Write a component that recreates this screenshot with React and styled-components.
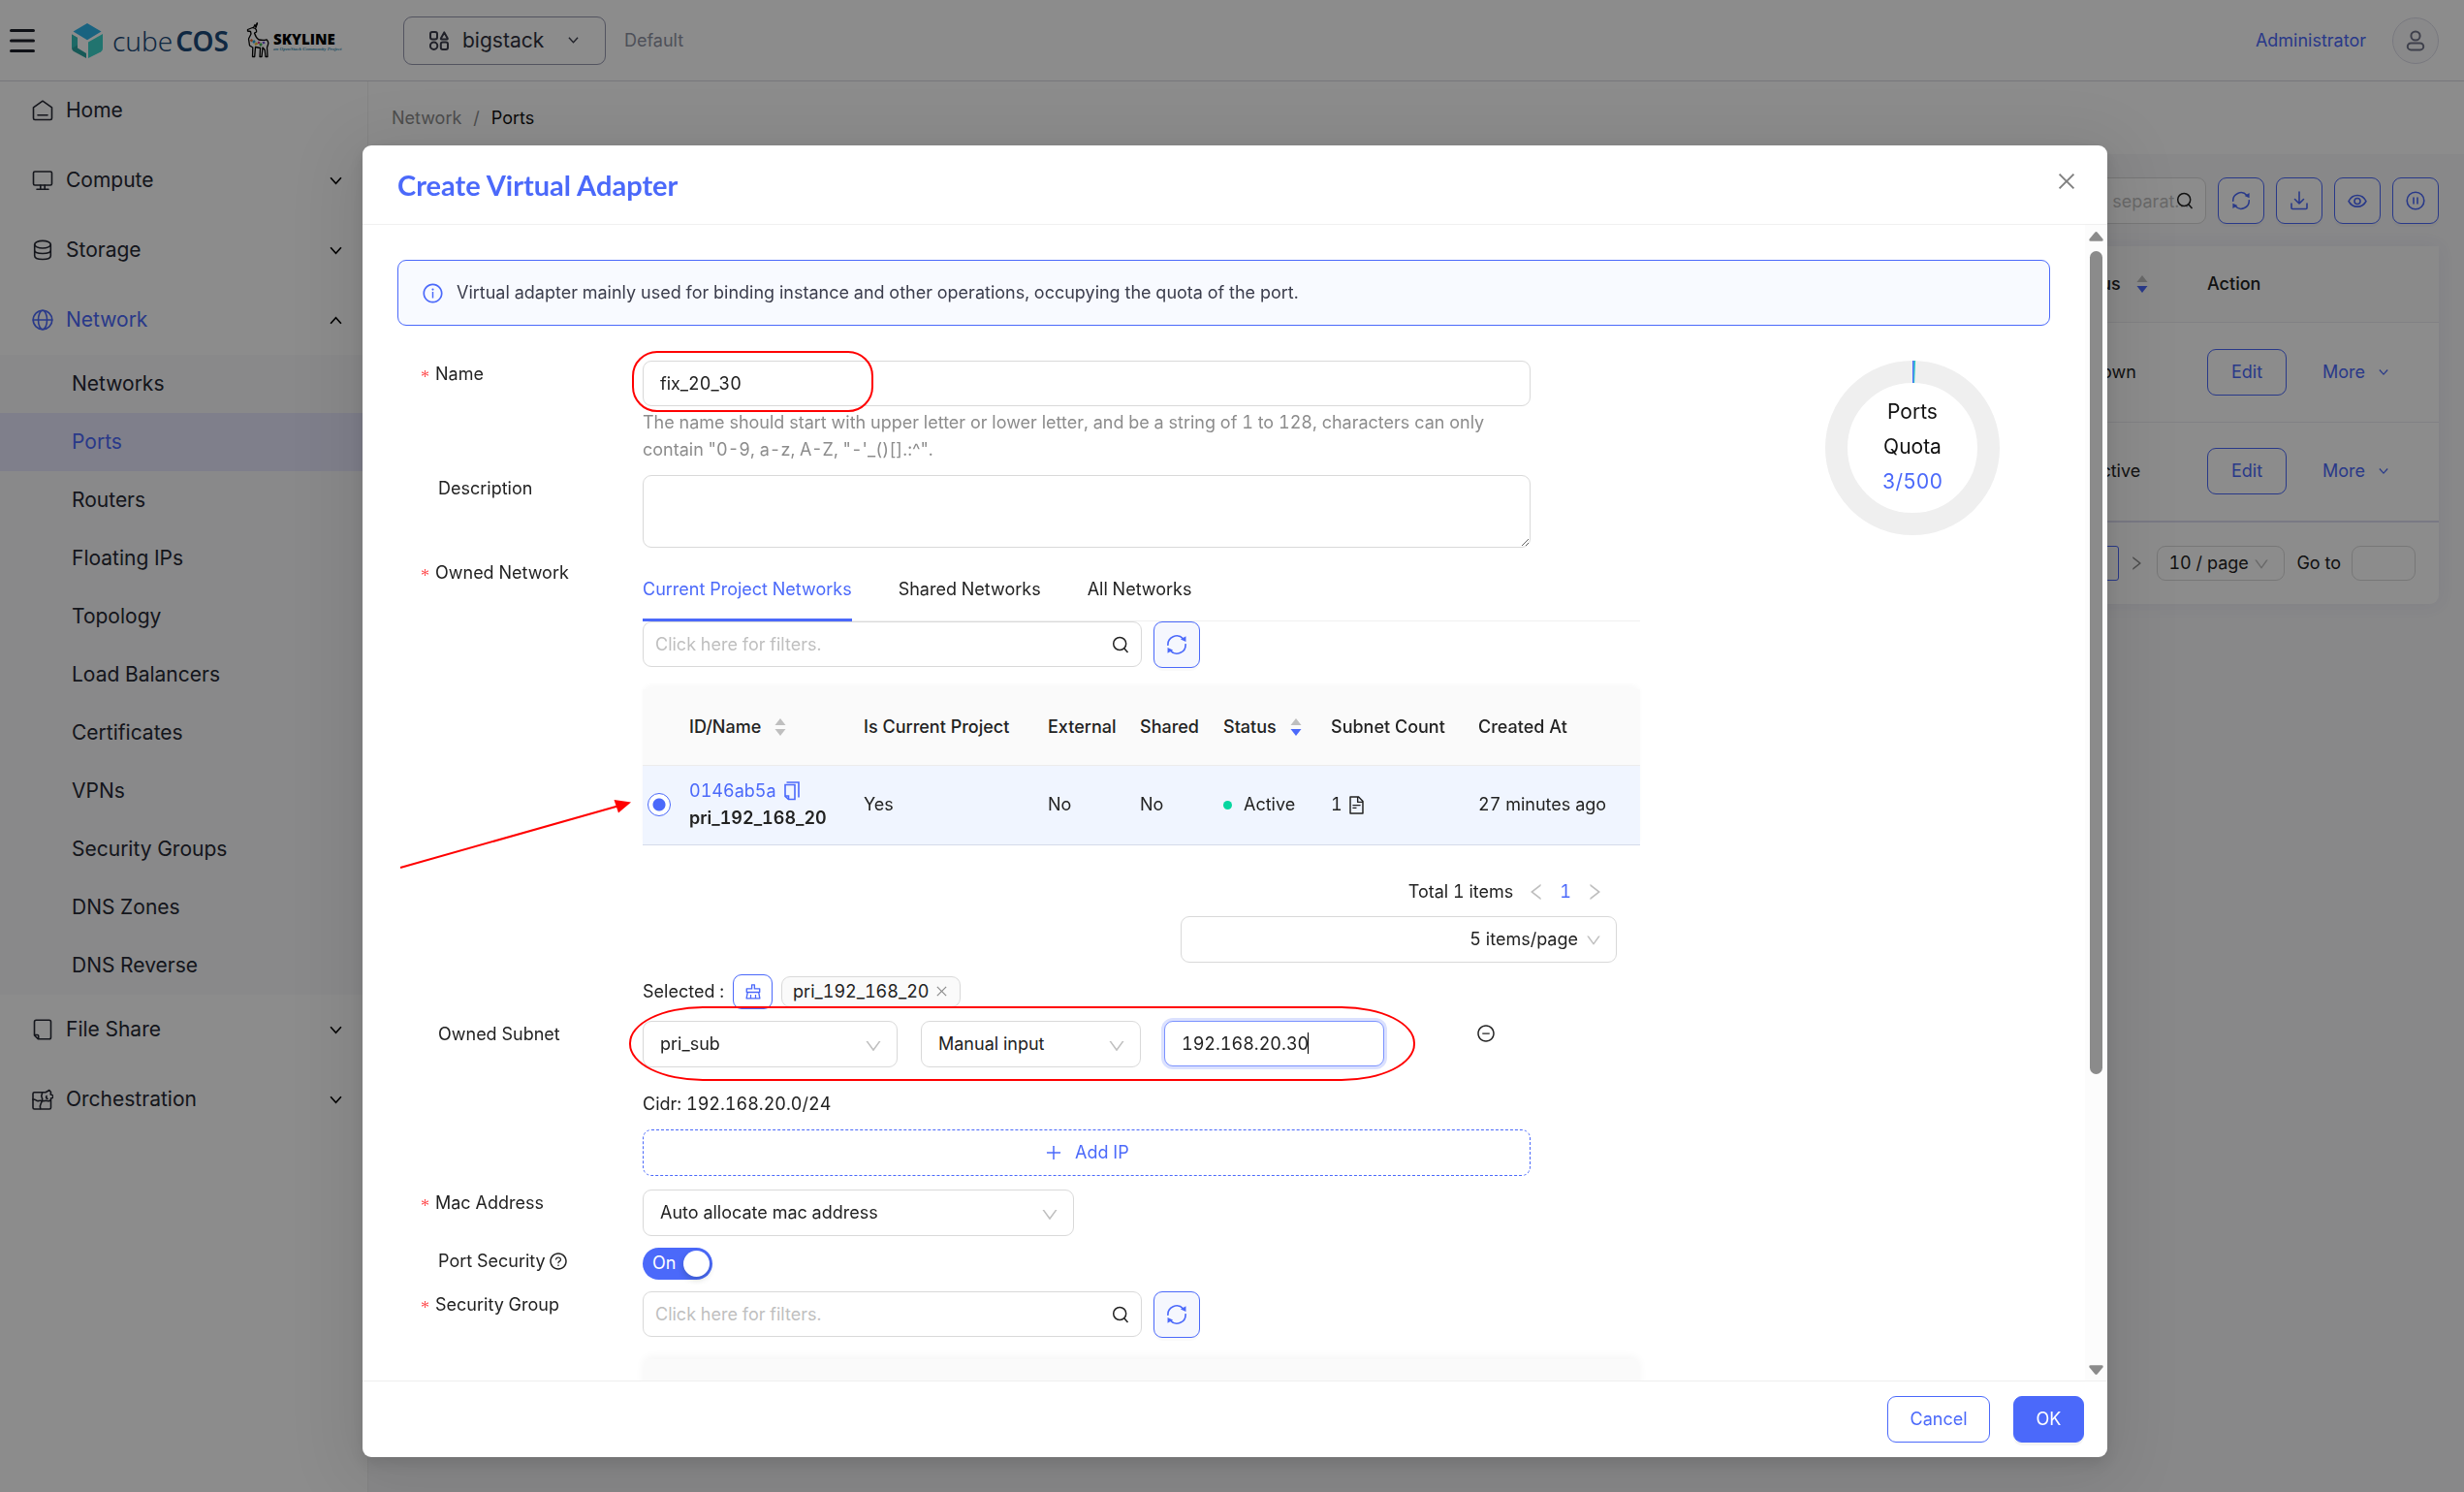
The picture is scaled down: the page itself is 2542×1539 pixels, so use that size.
import { useState } from "react";
import styled, { createGlobalStyle, css } from "styled-components";
import {
  AiOutlineClear,
  AiOutlineClose,
  AiOutlineDown,
  AiOutlineFileText,
  AiOutlineInfoCircle,
  AiOutlineLeft,
  AiOutlineMinusCircle,
  AiOutlinePlus,
  AiOutlineQuestionCircle,
  AiOutlineRight,
} from "react-icons/ai";

const blue = "#4b69fa";
const line = "#d9d9d9";

const subItems = [
  "Networks",
  "Ports",
  "Routers",
  "Floating IPs",
  "Topology",
  "Load Balancers",
  "Certificates",
  "VPNs",
  "Security Groups",
  "DNS Zones",
  "DNS Reverse",
];

export default function App() {
  return (
    <>
      <GlobalStyle />
      <Page>
        <TopBar />
        <Main>
          <SideMenu />
          <PortsPage />
        </Main>
      </Page>
      <Overlay>
        <CreateAdapter />
      </Overlay>
    </>
  );
}

function TopBar() {
  return (
    <Header>
      <MenuButton aria-label="menu">
        <svg width="26" height="26" viewBox="0 0 26 26" stroke="#1d1f28" strokeWidth="3" strokeLinecap="round">
          <path d="M1.5 2.5h23M1.5 13h23M1.5 23.5h23" />
        </svg>
      </MenuButton>
      <CubeLogo />
      <CubeName>
        cube<b>COS</b>
      </CubeName>
      <Llama />
      <Skyline>
        <strong>SKYLINE</strong>
        <em>an OpenStack Community Project</em>
      </Skyline>
      <ProjectButton>
        <svg width="20" height="20" viewBox="0 0 20 20" fill="none" stroke="#3b3d4c" strokeWidth="2">
          <rect x="1" y="1" width="7" height="7.5" rx="2" />
          <path d="M15.3 1.4l3.4 6.2c.2.5 0 .9-.5.9h-5.8c-.5 0-.8-.4-.5-.9z" strokeLinejoin="round" />
          <circle cx="4.6" cy="15.2" r="3.7" />
          <rect x="11.8" y="11.6" width="7.2" height="7.4" rx="2" />
        </svg>
        <span>bigstack</span>
        <Chevron size={11} color="#3b3d4c" />
      </ProjectButton>
      <Domain>Default</Domain>
      <UserLink href="#user">Administrator</UserLink>
      <Avatar aria-label="user">
        <svg width="20" height="22" viewBox="0 0 20 22" fill="none" stroke="#72758a" strokeWidth="2">
          <circle cx="10" cy="6" r="4.6" />
          <rect x="1.8" y="13.4" width="16.4" height="7" rx="3.5" />
        </svg>
      </Avatar>
    </Header>
  );
}

function SideMenu() {
  return (
    <Sidebar>
      <MenuRow href="#home">
        <HomeIcon />
        Home
      </MenuRow>
      <MenuRow href="#compute">
        <ComputeIcon />
        Compute
        <Chevron size={13} color="#000" />
      </MenuRow>
      <MenuRow href="#storage">
        <StorageIcon />
        Storage
        <Chevron size={13} color="#000" />
      </MenuRow>
      <MenuRow href="#network" $active>
        <NetworkIcon />
        Network
        <Chevron size={13} color="#000" up />
      </MenuRow>
      <SubMenu>
        {subItems.map((item) => (
          <SubRow key={item} href={"#" + item} $active={item === "Ports"}>
            {item}
          </SubRow>
        ))}
      </SubMenu>
      <MenuRow href="#share">
        <ShareIcon />
        File Share
        <Chevron size={13} color="#000" />
      </MenuRow>
      <MenuRow href="#orchestration">
        <PuzzleIcon />
        Orchestration
        <Chevron size={13} color="#000" />
      </MenuRow>
    </Sidebar>
  );
}

function PortsPage() {
  return (
    <Content>
      <Breadcrumb>
        <a href="#network">Network</a>
        <span>/</span>
        <strong>Ports</strong>
      </Breadcrumb>
      <ListArea>
        <Toolbar>
          <PageSearch>
            <input aria-label="filter" placeholder="Multiple filter tags are separated by enter" />
            <SearchIcon />
          </PageSearch>
          <SquareButton aria-label="refresh">
            <RefreshIcon size={20} />
          </SquareButton>
          <SquareButton aria-label="download">
            <svg width="20" height="20" viewBox="0 0 20 20" {...strokeProps}>
              <path d="M10 1v12M5.5 8.5L10 13l4.500-4.500M2 13v4.500q0 1 1 1h14q1 0 1-1V13" />
            </svg>
          </SquareButton>
          <SquareButton aria-label="columns">
            <svg width="20" height="20" viewBox="0 0 20 20" {...strokeProps}>
              <path d="M1 10.500C5 2.500 15 2.500 19 10.500C15 18 5 18 1 10.500z" />
              <circle cx="10" cy="10.500" r="3" />
            </svg>
          </SquareButton>
          <SquareButton aria-label="pause">
            <svg width="20" height="20" viewBox="0 0 20 20" {...strokeProps}>
              <circle cx="10" cy="10" r="8.800" />
              <path d="M8 7v6M12 7v6" />
            </svg>
          </SquareButton>
        </Toolbar>
        <Card>
          <PortsTable>
            <colgroup>
              <col />
              <col style={{ width: 144 }} />
              <col style={{ width: 239 }} />
            </colgroup>
            <thead>
              <tr>
                <th></th>
                <th>
                  <Inline $gap={16}>
                    Status <Sorter down />
                  </Inline>
                </th>
                <th>Action</th>
              </tr>
            </thead>
            <tbody>
              <PortRow status="Down" />
              <PortRow status="Active" />
            </tbody>
          </PortsTable>
          <PageFooter>
            <PageNumber>1</PageNumber>
            <AiOutlineRight size={18} color="#8c8c8c" />
            <SelectBox $width={132} $height={36} $pad={11}>
              <select aria-label="page size">
                <option>10 / page</option>
              </select>
              <AiOutlineDown size={18} />
            </SelectBox>
            <GoTo>
              Go to
              <input aria-label="page" />
            </GoTo>
          </PageFooter>
        </Card>
      </ListArea>
    </Content>
  );
}

function PortRow({ status }) {
  return (
    <tr>
      <td></td>
      <td>
        <Inline $gap={13}>
          <Dot $off={status === "Down"} />
          {status}
        </Inline>
      </td>
      <td>
        <Inline $gap={37}>
          <OutlineButton $width={82}>Edit</OutlineButton>
          <MoreButton>
            More <Chevron size={10} color={blue} />
          </MoreButton>
        </Inline>
      </td>
    </tr>
  );
}

function CreateAdapter() {
  const [name, setName] = useState("fix_20_30");
  const [ip, setIp] = useState("192.168.20.30");
  const [security, setSecurity] = useState(true);

  return (
    <Modal role="dialog" aria-labelledby="modal-title">
      <ModalHeader>
        <h2 id="modal-title">Create Virtual Adapter</h2>
        <CloseButton aria-label="close">
          <AiOutlineClose size={24} />
        </CloseButton>
      </ModalHeader>

      <ModalBody>
        <Scrollable>
          <Alert>
            <AiOutlineInfoCircle size={23} color={blue} />
            Virtual adapter mainly used for binding instance and other operations, occupying the quota of the port.
          </Alert>

          <Columns>
            <Form>
              <Row>
                <Label htmlFor="name" $required>Name</Label>
                <Field>
                  <TextInput id="name" value={name} onChange={(e) => setName(e.target.value)} />
                  <Help>
                    The name should start with upper letter or lower letter, and be a string of 1 to 128, characters can
                    only contain "0-9, a-z, A-Z, "-'_()[].:^".
                  </Help>
                  <NameMark />
                </Field>
              </Row>

              <Row>
                <Label htmlFor="description">Description</Label>
                <Field>
                  <TextArea id="description" />
                </Field>
              </Row>

              <Row>
                <Label as="span" $required>Owned Network</Label>
                <Field>
                  <NetworkPicker />
                </Field>
              </Row>

              <Row>
                <Label htmlFor="subnet">Owned Subnet</Label>
                <Field>
                  <SubnetRow>
                    <SelectBox $width={263} $height={48} $pad={17}>
                      <select id="subnet">
                        <option>pri_sub</option>
                      </select>
                      <AiOutlineDown size={20} />
                    </SelectBox>
                    <SelectBox $width={227} $height={48} $pad={17}>
                      <select aria-label="ip type">
                        <option>Manual input</option>
                      </select>
                      <AiOutlineDown size={20} />
                    </SelectBox>
                    <IpBox>
                      <IpInput aria-label="ip" value={ip} onChange={(e) => setIp(e.target.value)} />
                      <Caret />
                    </IpBox>
                    <RemoveButton aria-label="remove">
                      <AiOutlineMinusCircle size={20} />
                    </RemoveButton>
                    <SubnetMark />
                  </SubnetRow>
                  <Cidr>Cidr: 192.168.20.0/24</Cidr>
                  <AddButton>
                    <AiOutlinePlus size={20} />
                    Add IP
                  </AddButton>
                </Field>
              </Row>

              <Row>
                <Label htmlFor="mac" $required>Mac Address</Label>
                <Field>
                  <SelectBox $width={445} $height={48} $pad={17}>
                    <select id="mac">
                      <option>Auto allocate mac address</option>
                    </select>
                    <AiOutlineDown size={20} />
                  </SelectBox>
                </Field>
              </Row>

              <Row>
                <Label htmlFor="security">
                  Port Security
                  <AiOutlineQuestionCircle size={20} />
                </Label>
                <Field>
                  <Switch>
                    <input
                      id="security"
                      type="checkbox"
                      checked={security}
                      onChange={() => setSecurity(!security)}
                    />
                    <span>On</span>
                    <i />
                  </Switch>
                </Field>
              </Row>

              <Row>
                <Label htmlFor="group" $required>Security Group</Label>
                <Field>
                  <FilterBar id="group" />
                  <TableBox>
                    <EmptyHead />
                  </TableBox>
                </Field>
              </Row>
            </Form>

            <QuotaSide>
              <Quota>
                <svg width="180" height="180" viewBox="0 0 180 180">
                  <circle cx="90" cy="90" r="78.500" fill="none" stroke="#efefef" strokeWidth="23" />
                  <path d="M90 0h1.700v23H90z" fill={blue} />
                  <path d="M91.600 0h1.500l-1 23h-.9z" fill="#1fc7c4" />
                </svg>
                <QuotaText>
                  Ports
                  <br />
                  Quota
                  <br />
                  <b>3/500</b>
                </QuotaText>
              </Quota>
            </QuotaSide>
          </Columns>
        </Scrollable>

        <ScrollTrack>
          <svg width="15" height="10" viewBox="0 0 15 10" fill="#8b8b8b">
            <path d="M6.200.8q1.300-1.400 2.600 0l5.600 6.800q1 2-1.200 2.200H1.800Q-.4 9.600.6 7.600z" />
          </svg>
          <ScrollThumb />
          <svg width="15" height="10" viewBox="0 0 15 10" fill="#8b8b8b">
            <path d="M6.200 9.200q1.300 1.400 2.600 0l5.600-6.800q1-2-1.200-2.200H1.800Q-.4.400.6 2.400z" />
          </svg>
        </ScrollTrack>
      </ModalBody>

      <ModalFooter>
        <OutlineButton $width={106}>Cancel</OutlineButton>
        <OkButton $width={73}>OK</OkButton>
      </ModalFooter>
    </Modal>
  );
}

function FilterBar({ id }) {
  return (
    <Filter>
      <FilterInput>
        <input id={id} aria-label="filters" placeholder="Click here for filters." />
        <SearchIcon />
      </FilterInput>
      <SquareButton $tint aria-label="refresh">
        <RefreshIcon size={22} />
      </SquareButton>
    </Filter>
  );
}

function NetworkPicker() {
  return (
    <>
      <Tabs>
        <Tab $active>Current Project Networks</Tab>
        <Tab>Shared Networks</Tab>
        <Tab>All Networks</Tab>
      </Tabs>
      <FilterBar />
      <TableBox>
        <NetworkTable>
          <colgroup>
            {[48, 180, 190, 95, 86, 111, 152].map((width, i) => (
              <col key={i} style={{ width }} />
            ))}
            <col />
          </colgroup>
          <thead>
            <tr>
              <th></th>
              <th>
                <Inline $gap={14}>
                  ID/Name <Sorter />
                </Inline>
              </th>
              <th>Is Current Project</th>
              <th>External</th>
              <th>Shared</th>
              <th>
                <Inline $gap={14}>
                  Status <Sorter down />
                </Inline>
              </th>
              <th>Subnet Count</th>
              <th>Created At</th>
            </tr>
          </thead>
          <tbody>
            <tr>
              <td>
                <Radio type="radio" name="network" aria-label="pri_192_168_20" defaultChecked />
              </td>
              <td>
                <NetworkLink href="#0146ab5a">
                  0146ab5a
                  <svg width="16" height="20" viewBox="0 0 16 20" fill="none" stroke={blue} strokeWidth="1.600">
                    <path d="M1 3.500h10v15H4.500L1 15.300zM2.500 1H15v15.500" />
                    <path d="M1 15h3.500v3.500" />
                  </svg>
                </NetworkLink>
                <NetworkName>pri_192_168_20</NetworkName>
              </td>
              <td>Yes</td>
              <td>No</td>
              <td>No</td>
              <td>
                <Inline $gap={12}>
                  <Dot />
                  Active
                </Inline>
              </td>
              <td>
                <Inline $gap={4}>
                  1 <AiOutlineFileText size={21} />
                </Inline>
              </td>
              <td>27 minutes ago</td>
            </tr>
          </tbody>
        </NetworkTable>
        <Arrow width="244" height="78" viewBox="0 0 244 78">
          <path d="M2 72L228 8" stroke="#f00" strokeWidth="2" />
          <path d="M240 4.500L222.500 2L227 15.500z" fill="#f00" />
        </Arrow>
      </TableBox>
      <Pager>
        <span>Total 1 items</span>
        <AiOutlineLeft size={22} color="#bfbfbf" />
        <a href="#page-1">1</a>
        <AiOutlineRight size={22} color="#bfbfbf" />
      </Pager>
      <PageSize>
        <SelectBox $width={450} $height={48} $pad={14} $right>
          <select aria-label="items per page">
            <option>5 items/page</option>
          </select>
          <AiOutlineDown size={18} />
        </SelectBox>
      </PageSize>
      <Selected>
        Selected :
        <ClearButton aria-label="clear">
          <AiOutlineClear size={20} />
        </ClearButton>
        <Tag>
          pri_192_168_20
          <AiOutlineClose size={15} color="#8c8c8c" />
        </Tag>
      </Selected>
    </>
  );
}

/* icons */

const strokeProps = {
  fill: "none",
  stroke: blue,
  strokeWidth: 1.6,
  strokeLinecap: "round",
  strokeLinejoin: "round",
};

const menuProps = { ...strokeProps, stroke: "currentColor", width: 22, height: 22, viewBox: "0 0 22 22" };

const Chevron = ({ size, color, up }) => (
  <svg className="chevron" width={size} height={size} viewBox="0 0 12 12" fill="none" stroke={color} strokeWidth="1.500">
    <path d={up ? "M1 9l5-5.500 5 5.500" : "M1 3l5 5.500 5-5.500"} />
  </svg>
);

const SearchIcon = () => (
  <svg width="18" height="18" viewBox="0 0 18 18" fill="none" stroke="#222" strokeWidth="1.500">
    <circle cx="8.200" cy="8" r="6.500" />
    <path d="M12.800 12.800L16.500 17" />
  </svg>
);

const RefreshIcon = ({ size }) => (
  <svg width={size} height={size} viewBox="0 0 20 20" fill="none" stroke={blue} strokeWidth="1.500">
    <path d="M1.800 10.800A8.200 8.200 0 0 1 16 4.400M18.200 9.200A8.200 8.200 0 0 1 4 15.600" />
    <path d="M18.600 2v5.200l-5-2.200zM1.400 18v-5.200l5 2.200z" fill={blue} stroke="none" />
  </svg>
);

const Sorter = ({ down }) => (
  <svg width="12" height="20" viewBox="0 0 12 20">
    <path d="M6 1L11.500 8H.5z" fill="#bfbfbf" />
    <path d="M6 19L.5 12h11z" fill={down ? blue : "#bfbfbf"} />
  </svg>
);

const HomeIcon = () => (
  <svg {...menuProps}>
    <path d="M1.500 7.800L11 1.200l9.500 6.600V19q0 1.500-1.500 1.500H3Q1.500 20.500 1.500 19zM6 15.800h10" />
  </svg>
);
const ComputeIcon = () => (
  <svg {...menuProps}>
    <rect x="1.500" y="2" width="19" height="14" rx="1.500" />
    <path d="M8.800 16v4M13.200 16v4M5 20.200h12" />
  </svg>
);
const StorageIcon = () => (
  <svg {...menuProps}>
    <ellipse cx="11" cy="5.200" rx="8.300" ry="3.800" />
    <path d="M2.700 5.200v11.500c0 5 16.600 5 16.600 0V5.200M2.700 11c0 4.600 16.600 4.600 16.600 0" />
  </svg>
);
const NetworkIcon = () => (
  <svg {...menuProps}>
    <circle cx="11" cy="11" r="9.800" />
    <ellipse cx="11" cy="11" rx="4.500" ry="9.800" />
    <path d="M1.200 11h19.600" />
  </svg>
);
const ShareIcon = () => (
  <svg {...menuProps}>
    <path d="M6.500 20.800L2.500 17V3q0-1.800 1.800-1.800h13.500q1.700 0 1.700 1.800v16q0 1.800-1.700 1.800zM2.700 16.500h3q1 0 1 1v3" />
  </svg>
);
const PuzzleIcon = () => (
  <svg {...menuProps}>
    <path d="M14 3.800H2.500Q1 3.800 1 5.300v14.200Q1 21 2.500 21H18q1.500 0 1.500-1.500V10l2-.7q.8-1.600-.6-2.800l-1.700-.5.300-2.500-1.700-2-2 1.200z" />
    <path d="M10.500 4c.3 2.500-1.800 3-.3 5 1.200 1.800.2 3.500-.2 4.500-.6 2-2.500 3-1.300 7M1 11c3-.5 3.500 2.500 6 1.500s3 .8 6 0 3 1.500 6-.5M15 7.500q-1 2 1 3" />
  </svg>
);

const CubeLogo = () => (
  <CubeSvg width="32" height="36" viewBox="0 0 32 36">
    <path d="M16 0L30.500 8.400L16 17.200L1.500 8.400z" fill="#2fb4ea" />
    <path d="M0 11.500L6 15v10.500l9 5.500v5L3 29.500Q0 28 0 25z" fill="#2ba39e" />
    <path d="M17 19.600L32 11v15q0 2.500-2 3.500L17 36z" fill="#3cd3cb" />
    <path d="M0 11.500L6 15v7.500L0 26z" fill="#35c0ba" />
  </CubeSvg>
);

const Llama = () => (
  <svg width="24" height="37" viewBox="0 0 24 37" fill="none" stroke="#000" strokeWidth="1.300" strokeLinejoin="round">
    <path d="M7.500 5.500L9 2.500l1 3M9.500 5l2-4.500M1.500 7.500l5-2 3 1q1.500 1.500 1 3.500l-2 1q1.500 5 4.500 7 5 1 8-.2 2.500 2.200 1.500 5.200l-1 3 .5 9.500h-2l-.8-7-2.200-2.500-1 9.500h-2l.5-9-5-1-.8 10H6.500l.3-9.500L3.500 24 2.500 17 5 12 4.500 9.500 1.500 9z" />
    <path d="M10 5.500l1.500-5" />
    <path d="M4.500 19.500l2-1.500" stroke="#ef6a32" strokeWidth="2.500" />
    <path d="M7 21l2-2" stroke="#2aa7dd" strokeWidth="2.500" />
    <path d="M9 23l2.500-1.500" stroke="#f2c230" strokeWidth="2.500" />
    <path d="M12 20.500l2 1" stroke="#e0358b" strokeWidth="2.500" />
    <path d="M14 24l2-2" stroke="#3daf56" strokeWidth="2.500" />
    <path d="M17 21.500l2-1" stroke="#6a4bd8" strokeWidth="2.500" />
  </svg>
);

const GlobalStyle = createGlobalStyle`
  *{
    box-sizing: border-box;
  }
  body{
    margin: 0;
    font-family: Inter, sans-serif;
    font-size: 18px;
    font-variant-numeric: tabular-nums;
    line-height: 28px;
    color: #222;
    background-color: #fff;
  }
  button, input, select, textarea{
    font: inherit;
    font-variant-numeric: tabular-nums;
    color: inherit;
  }
  button{
    cursor: pointer;
    padding: 0;
  }
  a{
    text-decoration: none;
    color: inherit;
  }
  svg{
    flex-shrink: 0;
  }
`;

const Page = styled.div`
  display: flex;
  flex-direction: column;
  height: 100vh;
  overflow: hidden;
`;
const Header = styled.header`
  height: 84px;
  flex-shrink: 0;
  display: flex;
  align-items: center;
  padding: 0 26px 0 10px;
  border-bottom: 1px solid #d9d9e0;
`;
const MenuButton = styled.button`
  display: flex;
  border: none;
  background: none;
`;
const CubeSvg = styled.svg`
  margin-left: 38px;
`;
const CubeName = styled.div`
  margin-left: 10px;
  width: 138px;
  font-family: "Noto Sans", sans-serif;
  font-size: 28px;
  font-weight: 300;
  color: #1d4a78;
  b{
    margin-left: 3px;
    font-weight: 600;
  }
`;
const Skyline = styled.div`
  display: flex;
  flex-direction: column;
  margin-left: 4px;
  width: 134px;
  padding-top: 2px;
  strong{
    font-family: "Open Sans", sans-serif;
    font-size: 15px;
    font-weight: 800;
    line-height: 16px;
    color: #000;
  }
  em{
    font-family: "Liberation Serif", serif;
    font-size: 5px;
    font-weight: 700;
    line-height: 6px;
    color: #3a8fb5;
  }
`;
const ProjectButton = styled.button`
  display: flex;
  align-items: center;
  width: 209px;
  height: 50px;
  padding: 0 27px 0 26px;
  background: none;
  border: 1px solid #9799b0;
  border-radius: 9px;
  font-size: 21px;
  color: #2f313d;
  span{
    margin-left: 14px;
  }
  .chevron{
    margin-left: auto;
  }
`;
const Domain = styled.span`
  margin-left: 19px;
  color: #8f92a3;
`;
const UserLink = styled.a`
  margin-left: auto;
  color: ${blue};
`;
const Avatar = styled.button`
  width: 48px;
  height: 48px;
  margin-left: 27px;
  display: flex;
  align-items: center;
  justify-content: center;
  border: 1px solid #dcdce8;
  border-radius: 50%;
  background-color: #fafafc;
`;
const Main = styled.div`
  display: flex;
  flex: 1;
`;
const Sidebar = styled.nav`
  width: 380px;
  flex-shrink: 0;
  display: flex;
  flex-direction: column;
  gap: 12px;
  border-right: 1px solid #f0f0f0;
`;
const MenuRow = styled.a`
  display: flex;
  align-items: center;
  gap: 13px;
  height: 60px;
  padding: 0 26px 0 33px;
  font-size: 21px;
  color: ${(props) => (props.$active ? blue : "#262833")};
  .chevron{
    margin-left: auto;
  }
`;
const SubMenu = styled.div`
  margin: -6px 0;
  background-color: #fafafc;
`;
const SubRow = styled.a`
  display: flex;
  align-items: center;
  height: 60px;
  padding-left: 74px;
  font-size: 21px;
  color: ${(props) => (props.$active ? blue : "#262833")};
  background-color: ${(props) => (props.$active ? "#e8e8fd" : "transparent")};
`;
const Content = styled.main`
  flex: 1;
  min-width: 0;
  display: flex;
  flex-direction: column;
`;
const Breadcrumb = styled.div`
  height: 75px;
  display: flex;
  align-items: center;
  gap: 12px;
  padding: 0 24px;
  color: #8c8c8c;
  strong{
    font-weight: 400;
    color: #111;
  }
`;
const ListArea = styled.div`
  flex: 1;
  padding: 24px 26px 0 24px;
  background-color: #f7f7f9;
`;
const Toolbar = styled.div`
  display: flex;
  justify-content: flex-end;
  gap: 12px;
  margin-bottom: 23px;
`;
const PageSearch = styled.div`
  position: relative;
  width: 300px;
  input{
    width: 100%;
    height: 48px;
    padding: 0 8px 0 13px;
    border: 1px solid ${line};
    border-radius: 9px;
    background-color: #fff;
    text-overflow: ellipsis;
  }
  input::placeholder{
    color: #bfbfbf;
  }
  svg{
    position: absolute;
    right: 13px;
    top: 15px;
  }
`;
const SquareButton = styled.button`
  width: 48px;
  height: 48px;
  display: flex;
  align-items: center;
  justify-content: center;
  border: 1px solid ${blue};
  border-radius: 9px;
  background-color: ${(props) => (props.$tint ? "#f5f7fe" : "#fff")};
  box-shadow: 0 3px 0 rgba(0, 0, 0, 0.02);
`;
const Card = styled.div`
  border-radius: 9px;
  background-color: #fff;
  box-shadow: 0 0 18px rgba(80, 80, 160, 0.08);
`;
const PortsTable = styled.table`
  width: 100%;
  table-layout: fixed;
  border-collapse: collapse;
  th, td{
    padding: 0;
    text-align: left;
    border-bottom: 1px solid #ececf0;
  }
  th{
    height: 78px;
    font-weight: 500;
    background-color: #fbfbfb;
  }
  td{
    height: 103px;
  }
  tr:last-child td{
    border-bottom: 2px solid #dcdcf0;
  }
`;
const PageFooter = styled.div`
  display: flex;
  align-items: center;
  justify-content: flex-end;
  height: 84px;
  padding-right: 24px;
  > svg{
    margin: 0 12px 0 9px;
  }
`;
const PageNumber = styled.button`
  width: 36px;
  height: 36px;
  border: 1px solid ${blue};
  border-radius: 3px;
  background-color: #fff;
  color: ${blue};
`;
const GoTo = styled.label`
  display: flex;
  align-items: center;
  gap: 11px;
  margin-left: 12px;
  input{
    width: 66px;
    height: 36px;
    border: 1px solid ${line};
    border-radius: 9px;
  }
`;
const Inline = styled.div`
  display: flex;
  align-items: center;
  gap: ${(props) => props.$gap}px;
`;
const Dot = styled.i`
  width: 9px;
  height: 9px;
  border-radius: 50%;
  background-color: ${(props) => (props.$off ? "#bfbfbf" : "#06d6a0")};
`;
const OutlineButton = styled.button`
  width: ${(props) => props.$width}px;
  height: 48px;
  border: 1px solid ${blue};
  border-radius: 9px;
  background-color: #fff;
  color: ${blue};
`;
const OkButton = styled(OutlineButton)`
  background-color: ${blue};
  color: #fff;
  box-shadow: 0 3px 0 rgba(0, 0, 0, 0.045);
`;
const MoreButton = styled.button`
  display: flex;
  align-items: center;
  gap: 14px;
  border: none;
  background: none;
  color: ${blue};
`;

const Overlay = styled.div`
  position: fixed;
  inset: 0;
  display: flex;
  padding: 150px 368px 36px 374px;
  background-color: rgba(0, 0, 0, 0.45);
`;
const Modal = styled.section`
  flex: 1;
  min-width: 0;
  display: flex;
  flex-direction: column;
  border-radius: 9px;
  background-color: #fff;
  overflow: hidden;
  box-shadow: 0 6px 16px rgba(0, 0, 0, 0.12), 0 12px 72px 24px rgba(0, 0, 0, 0.08);
`;
const ModalHeader = styled.div`
  display: flex;
  align-items: center;
  justify-content: space-between;
  height: 82px;
  flex-shrink: 0;
  padding: 0 30px 0 36px;
  border-bottom: 1px solid #f0f0f0;
  h2{
    margin: 0;
    font-family: Lato, sans-serif;
    font-size: 29px;
    font-weight: 700;
    color: ${blue};
  }
`;
const CloseButton = styled.button`
  display: flex;
  padding-bottom: 8px;
  border: none;
  background: none;
  color: #7f7f7f;
`;
const ModalBody = styled.div`
  display: flex;
  flex: 1;
  min-height: 0;
`;
const Scrollable = styled.div`
  flex: 1;
  min-width: 0;
  padding: 36px 36px 0;
  overflow: hidden;
`;
const ScrollTrack = styled.div`
  width: 23px;
  display: flex;
  flex-direction: column;
  align-items: center;
  padding: 7px 0 6px;
  background-color: #fcfcfc;
  svg:last-child{
    margin-top: auto;
  }
`;
const ScrollThumb = styled.div`
  width: 13px;
  height: 72%;
  margin-top: 10px;
  border-radius: 7px;
  background-color: #8b8b8b;
`;
const ModalFooter = styled.div`
  display: flex;
  justify-content: flex-end;
  gap: 24px;
  padding: 15px 24px;
  border-top: 1px solid #efefef;
`;
const Alert = styled.div`
  display: flex;
  align-items: center;
  gap: 13px;
  height: 68px;
  padding: 0 24px;
  border: 1px solid ${blue};
  border-radius: 9px;
  background-color: #f8faff;
  color: #3b3d4c;
`;
const Columns = styled.div`
  display: grid;
  grid-template-columns: minmax(0, 1fr) 423px;
  margin-top: 36px;
`;
const Form = styled.form`
  display: flex;
  flex-direction: column;
  gap: 12px;
  padding-left: 24px;
`;
const Row = styled.div`
  display: grid;
  grid-template-columns: 229px minmax(0, 1fr);
  align-items: start;
`;
const Label = styled.label`
  display: flex;
  align-items: center;
  gap: 3px;
  ${(props) =>
    props.$required
      ? css`
          &::before{
            content: "*";
            width: 12px;
            padding-top: 6px;
            font-family: "Liberation Serif", serif;
            line-height: 22px;
            color: #ff4d4f;
          }
        `
      : css`
          padding-left: 18px;
        `}
`;
const Field = styled.div`
  position: relative;
`;
const TextInput = styled.input`
  display: block;
  width: 89%;
  height: 47px;
  padding: 0 17px;
  border: 1px solid ${line};
  border-radius: 9px;
  outline: none;
`;
const TextArea = styled.textarea`
  display: block;
  width: 89%;
  height: 75px;
  border: 1px solid ${line};
  border-radius: 9px;
  resize: vertical;
`;
const Help = styled.p`
  width: 89%;
  margin: 3px 0 0;
  color: #8c8c8c;
`;
const Mark = styled.div`
  position: absolute;
  border: 2px solid #f00;
  pointer-events: none;
`;
const NameMark = styled(Mark)`
  left: -11px;
  top: -10px;
  width: 249px;
  height: 63px;
  border-radius: 26px;
`;
const SubnetMark = styled(Mark)`
  left: -14px;
  top: -15px;
  width: 811px;
  height: 77px;
  border-radius: 76px / 38px;
`;
const Arrow = styled.svg`
  position: absolute;
  left: -252px;
  top: 112px;
`;
const Tabs = styled.div`
  display: flex;
  gap: 48px;
  height: 64px;
  border-bottom: 1px solid #f0f0f0;
`;
const Tab = styled.button`
  height: 64px;
  border: none;
  border-bottom: 3px solid ${(props) => (props.$active ? blue : "transparent")};
  background: none;
  color: ${(props) => (props.$active ? blue : "#222")};
`;
const Filter = styled.div`
  display: flex;
  gap: 12px;
`;
const FilterInput = styled.div`
  position: relative;
  width: 50%;
  input{
    width: 100%;
    height: 47px;
    padding: 0 48px 0 12px;
    border: 1px solid ${line};
    border-radius: 9px;
    outline: none;
  }
  input::placeholder{
    color: #bfbfbf;
  }
  svg{
    position: absolute;
    right: 13px;
    top: 15px;
  }
`;
const TableBox = styled.div`
  position: relative;
  margin-top: 22px;
`;
const NetworkTable = styled.table`
  width: 100%;
  table-layout: fixed;
  border-collapse: collapse;
  border-radius: 9px 9px 0 0;
  box-shadow: 0 -5px 5px #fafafa;
  th, td{
    padding: 0;
    text-align: left;
    white-space: nowrap;
  }
  th{
    height: 78px;
    font-weight: 500;
    background-color: #fafafa;
    border-bottom: 1px solid #ececec;
  }
  td{
    height: 82px;
    background-color: #f0f5ff;
    border-bottom: 1px solid #d5dbea;
  }
`;
const EmptyHead = styled.div`
  height: 78px;
  border-radius: 9px 9px 0 0;
  background-color: #fafafa;
  box-shadow: 0 -3px 9px rgba(0, 0, 0, 0.04);
`;
const Radio = styled.input`
  appearance: none;
  display: block;
  width: 24px;
  height: 24px;
  margin: 0 0 0 5px;
  border: 1px solid ${blue};
  border-radius: 50%;
  background-color: #fff;
  background-image: radial-gradient(${blue} 6px, transparent 7px);
`;
const NetworkLink = styled.a`
  display: flex;
  align-items: center;
  gap: 8px;
  color: ${blue};
`;
const NetworkName = styled.div`
  font-weight: 600;
`;
const Pager = styled.div`
  display: flex;
  align-items: center;
  justify-content: flex-end;
  height: 49px;
  margin-top: 24px;
  padding-right: 36px;
  gap: 13px;
  a{
    color: ${blue};
  }
`;
const PageSize = styled.div`
  display: flex;
  justify-content: flex-end;
  padding-right: 24px;
`;
const SelectBox = styled.div`
  position: relative;
  width: ${(props) => props.$width}px;
  select{
    appearance: none;
    display: block;
    width: 100%;
    height: ${(props) => props.$height}px;
    padding: 0 ${(props) => (props.$right ? 39 : 30)}px 0 ${(props) => props.$pad}px;
    border: 1px solid ${line};
    border-radius: 9px;
    background-color: #fff;
    text-align-last: ${(props) => (props.$right ? "right" : "left")};
  }
  svg{
    position: absolute;
    right: 15px;
    top: 50%;
    margin-top: -8px;
    color: #bfbfbf;
    pointer-events: none;
  }
`;
const Selected = styled.div`
  display: flex;
  align-items: center;
  height: 36px;
  margin-top: 12px;
`;
const ClearButton = styled.button`
  display: flex;
  align-items: center;
  justify-content: center;
  width: 41px;
  height: 36px;
  margin: 0 9px;
  border: 1px solid ${blue};
  border-radius: 9px;
  background-color: #fff;
  color: ${blue};
`;
const Tag = styled.span`
  display: flex;
  align-items: center;
  gap: 5px;
  height: 32px;
  padding: 0 11px;
  border: 1px solid ${line};
  border-radius: 9px;
  background-color: #fafafa;
`;
const SubnetRow = styled.div`
  position: relative;
  display: flex;
  gap: 24px;
`;
const IpBox = styled.div`
  position: relative;
  width: 227px;
`;
const IpInput = styled.input`
  width: 100%;
  height: 47px;
  padding: 0 17px;
  border: 1px solid #7c93ff;
  border-radius: 9px;
  outline: none;
  box-shadow: 0 0 0 3px rgba(75, 105, 250, 0.2);
`;
const Caret = styled.i`
  position: absolute;
  left: 148px;
  top: 12px;
  width: 1px;
  height: 22px;
  background-color: #000;
`;
const RemoveButton = styled.button`
  display: flex;
  height: 20px;
  margin: 3px 0 0 71px;
  border: none;
  background: none;
`;
const Cidr = styled.div`
  padding: 24px 0 12px;
`;
const AddButton = styled.button`
  display: flex;
  align-items: center;
  justify-content: center;
  gap: 12px;
  width: 89%;
  height: 48px;
  margin-bottom: 2px;
  border: 1px dashed ${blue};
  border-radius: 9px;
  background-color: #fff;
  color: ${blue};
`;
const Switch = styled.label`
  display: flex;
  align-items: center;
  justify-content: space-between;
  width: 72px;
  height: 33px;
  padding: 0 3px 0 10px;
  border-radius: 17px;
  background-color: ${blue};
  color: #fff;
  input{
    position: absolute;
    opacity: 0;
  }
  i{
    width: 27px;
    height: 27px;
    border-radius: 50%;
    background-color: #fff;
    box-shadow: 0 3px 6px rgba(0, 35, 11, 0.2);
  }
`;
const QuotaSide = styled.aside`
  display: flex;
  justify-content: flex-end;
  padding-right: 52px;
`;
const Quota = styled.div`
  position: relative;
  width: 180px;
  height: 180px;
`;
const QuotaText = styled.div`
  position: absolute;
  inset: 35px 0 0;
  text-align: center;
  font-size: 21px;
  line-height: 36px;
  color: #111;
  b{
    font-weight: 400;
    color: ${blue};
  }
`;
